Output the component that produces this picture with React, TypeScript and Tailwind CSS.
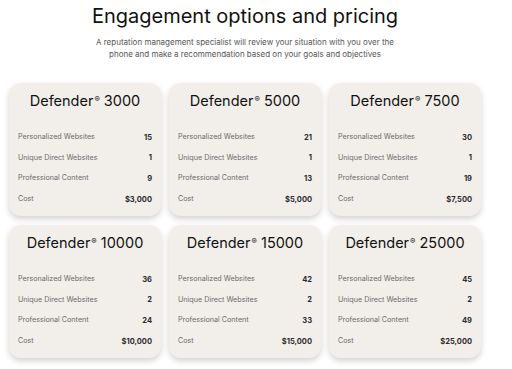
const plans = [
  { name: "3000", sites: 15, direct: 1, content: 9, cost: "$3,000" },
  { name: "5000", sites: 21, direct: 1, content: 13, cost: "$5,000" },
  { name: "7500", sites: 30, direct: 1, content: 19, cost: "$7,500" },
  { name: "10000", sites: 36, direct: 2, content: 24, cost: "$10,000" },
  { name: "15000", sites: 42, direct: 2, content: 33, cost: "$15,000" },
  { name: "25000", sites: 45, direct: 2, content: 49, cost: "$25,000" },
];

type Plan = (typeof plans)[number];

const Row = ({ label, value }: { label: string; value: string | number }) => (
  <div className="flex items-center justify-between h-[20.7px]">
    <span className="text-[7.2px] text-[#6a6a6a]">{label}</span>
    <span className="text-[7.5px] font-bold text-[#2a2a2a]">{value}</span>
  </div>
);

const PlanCard = ({ plan }: { plan: Plan }) => (
  <div className="h-[133px] rounded-[12px] bg-[#f2efea] shadow-[0_3px_6px_rgba(0,0,0,0.18)] px-[9px] pt-[8px]">
    <h2 className="text-center text-[14.5px] leading-[20px] text-[#111]">
      Defender<sup className="text-[8px] top-[-0.55em] ml-[1px]">®</sup> {plan.name}
    </h2>
    <div className="mt-[16px] flex flex-col">
      <Row label="Personalized Websites" value={plan.sites} />
      <Row label="Unique Direct Websites" value={plan.direct} />
      <Row label="Professional Content" value={plan.content} />
      <Row label="Cost" value={plan.cost} />
    </div>
  </div>
);

export default function App() {
  return (
    <div className="min-h-[369px] bg-white font-['Inter',sans-serif]">
      <div className="ml-[9px] w-[472px] pt-[4px]">
        <h1 className="text-center text-[20px] leading-[24px] text-[#111]">
          Engagement options and pricing
        </h1>
        <p className="mx-auto mt-[8px] w-[304px] text-center text-[8px] leading-[12px] text-[#555]">
          A reputation management specialist will review your situation with you over the
          phone and make a recommendation based on your goals and objectives
        </p>
        <div className="mt-[23px] grid grid-cols-[repeat(3,152px)] gap-x-[8px] gap-y-[9px]">
          {plans.map((p) => (
            <PlanCard key={p.name} plan={p} />
          ))}
        </div>
      </div>
    </div>
  );
}
